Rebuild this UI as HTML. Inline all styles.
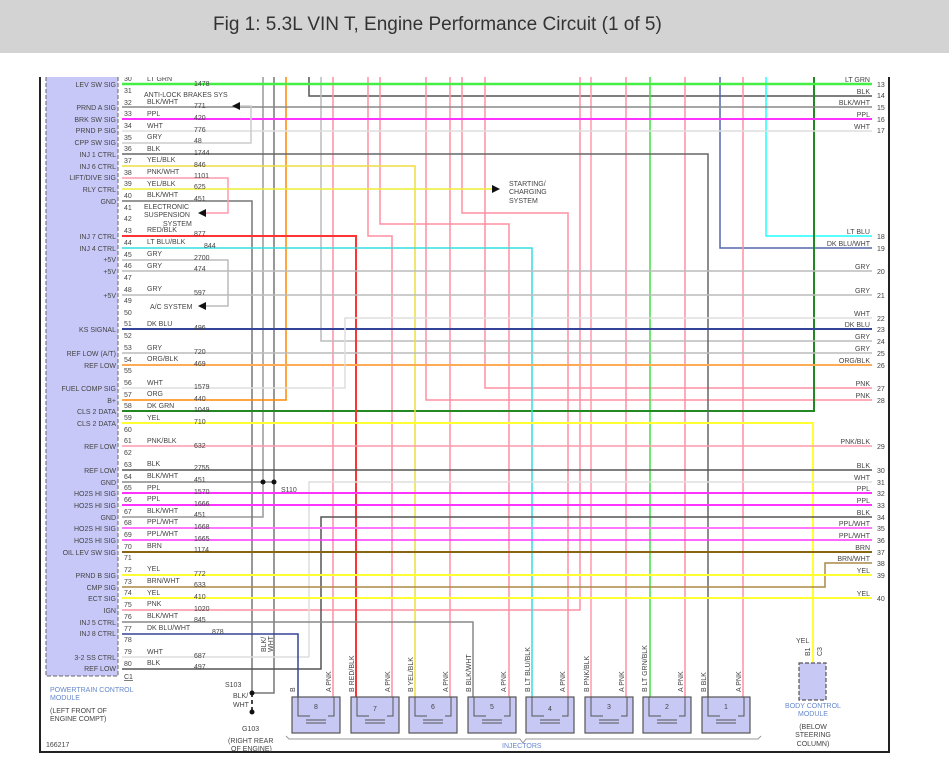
<!DOCTYPE html>
<html><head><meta charset="utf-8"><style>
html,body{margin:0;padding:0;background:#fff;width:949px;height:779px;overflow:hidden}
.hdr{position:absolute;left:0;top:0;width:949px;height:53px;background:#d3d3d3;font-family:"Liberation Sans",sans-serif;font-size:19px;color:#333;line-height:50px}
.hdr span{position:absolute;left:213px;top:0;white-space:nowrap}
svg{position:absolute;left:0;top:0}
text{font-family:"Liberation Sans",sans-serif;font-size:7px;fill:#444}
</style></head><body>
<svg width="949" height="779" viewBox="0 0 949 779">
<g fill="none" stroke-width="1.5">
<path d="M40 77V752H889V77" stroke="#222" stroke-width="2"/>
<rect x="46" y="77" width="72" height="599" fill="#c8c8f8" stroke="none"/>
<path d="M118 77V676H46V77" stroke="#666" stroke-dasharray="4,2" stroke-width="1"/>
<path d="M263 77V517H122" stroke="#999"/>
<path d="M274 77V693H252" stroke="#777"/>
<path d="M122 201H252V693" stroke="#777"/>
<path d="M286 77V400H122" stroke="#ff8800"/>
<path d="M309 77V96H872" stroke="#555"/>
<path d="M333 77V697" stroke="#ff8fa3"/>
<path d="M368 77V236H392V697" stroke="#ff8fa3"/>
<path d="M380 77V224H509V697" stroke="#ff8fa3"/>
<path d="M426 77V400H872" stroke="#ff8fa3"/>
<path d="M450 77V697" stroke="#ff8fa3"/>
<path d="M462 77V213H568V697" stroke="#ff8fa3"/>
<path d="M485 77V388H872" stroke="#ff8fa3"/>
<path d="M580 77V610H122" stroke="#ff8fa3"/>
<path d="M591 77V697" stroke="#ff99aa"/>
<path d="M626 77V697" stroke="#ff8fa3"/>
<path d="M650 77V697" stroke="#44dd44"/>
<path d="M685 77V697" stroke="#ff8fa3"/>
<path d="M720 77V248H872" stroke="#5566aa"/>
<path d="M743 77V697" stroke="#ff8fa3"/>
<path d="M766 77V236H872" stroke="#22ffff"/>
<path d="M814 77V411H122" stroke="#228822" stroke-width="2"/>
<path d="M321 77V341H872" stroke="#bbb"/>
<path d="M122 84H872" stroke="#44ee44" stroke-width="2.5"/>
<path d="M122 107H872" stroke="#888"/>
<path d="M122 119H872" stroke="#ff33ff" stroke-width="2"/>
<path d="M122 131H872" stroke="#ddd"/>
<path d="M122 143H251V106H240" stroke="#ccc"/>
<path d="M122 154H708V697" stroke="#666"/>
<path d="M122 166H415V697" stroke="#eedd44"/>
<path d="M122 178H228V213H206" stroke="#ff99aa"/>
<path d="M122 189H492" stroke="#eeee33"/>
<path d="M122 236H356V697" stroke="#ff3333" stroke-width="2"/>
<path d="M122 248H532V697" stroke="#33dddd"/>
<path d="M122 260H228V306H206" stroke="#bbb"/>
<path d="M122 271H872" stroke="#bbb"/>
<path d="M122 295H872" stroke="#bbb"/>
<path d="M122 329H872" stroke="#334499" stroke-width="2"/>
<path d="M122 353H872" stroke="#bbb"/>
<path d="M122 365H872" stroke="#ffaa55" stroke-width="2"/>
<path d="M122 388H345V318H872" stroke="#ddd"/>
<path d="M122 423H813V662" stroke="#ffff33" stroke-width="2"/>
<path d="M122 446H872" stroke="#ff99aa"/>
<path d="M122 470H872" stroke="#555"/>
<path d="M122 482H274" stroke="#888"/>
<path d="M309 657V482H872" stroke="#ddd"/>
<path d="M122 657H309" stroke="#ddd"/>
<path d="M122 669H321V517H872" stroke="#555"/>
<path d="M122 493H872" stroke="#ff33ff" stroke-width="2"/>
<path d="M122 505H872" stroke="#ff33ff" stroke-width="2"/>
<path d="M122 528H872" stroke="#ff77ff" stroke-width="2"/>
<path d="M122 540H872" stroke="#ff33ff" stroke-width="1.5"/>
<path d="M122 552H872" stroke="#886611" stroke-width="2"/>
<path d="M122 587H825V563H872" stroke="#aa8844"/>
<path d="M122 575H872" stroke="#ffff33" stroke-width="2"/>
<path d="M122 598H872" stroke="#ffff33" stroke-width="2"/>
<path d="M122 622H473V697" stroke="#888"/>
<path d="M122 634H298V697" stroke="#334499"/>
<path d="M252 693V712" stroke="#444" stroke-dasharray="4,3" stroke-width="2"/>
<path d="M286 736L289 739H520L523 743L526 739H758L761 736" stroke="#999" stroke-width="1"/>
</g>
<g fill="#111">
<path d="M232 106L240 102V110Z"/><path d="M198 213L206 209V217Z"/><path d="M198 306L206 302V310Z"/><path d="M500 189L492 185V193Z"/>
<circle cx="263" cy="482" r="2.5"/><circle cx="274" cy="482" r="2.5"/><circle cx="252" cy="693" r="2.5"/><circle cx="252" cy="712" r="2.5"/>
</g>
<g fill="#c8c8f4" stroke="#555" stroke-width="1.2">
<rect x="292" y="697" width="48" height="36"/><rect x="351" y="697" width="48" height="36"/><rect x="409" y="697" width="48" height="36"/><rect x="468" y="697" width="48" height="36"/><rect x="526" y="697" width="48" height="36"/><rect x="585" y="697" width="48" height="36"/><rect x="643" y="697" width="48" height="36"/><rect x="702" y="697" width="48" height="36"/>
<rect x="799" y="663" width="27" height="37" stroke-dasharray="4,2"/>
</g>
<g fill="none" stroke="#555" stroke-width="1">
<path d="M298 697V716H310M328 716H334V697"/><path d="M357 697V716H369M387 716H393V697"/><path d="M415 697V716H427M445 716H451V697"/><path d="M474 697V716H486M504 716H510V697"/><path d="M532 697V716H544M562 716H568V697"/><path d="M591 697V716H603M621 716H627V697"/><path d="M649 697V716H661M679 716H685V697"/><path d="M708 697V716H720M738 716H744V697"/>
<path d="M306 720H326M306 723H326M365 720H385M365 723H385M423 720H443M423 723H443M482 720H502M482 723H502M540 720H560M540 723H560M599 720H619M599 723H619M657 720H677M657 723H677M716 720H736M716 723H736"/>
</g>
<g>
<text x="316" y="709" text-anchor="middle">8</text><text x="375" y="711" text-anchor="middle">7</text><text x="433" y="709" text-anchor="middle">6</text><text x="492" y="709" text-anchor="middle">5</text><text x="550" y="711" text-anchor="middle">4</text><text x="609" y="709" text-anchor="middle">3</text><text x="667" y="709" text-anchor="middle">2</text><text x="726" y="709" text-anchor="middle">1</text>
</g>
<g transform="rotate(-90)">
<text x="-692" y="295">B</text><text x="-692" y="331">A PNK</text>
<text x="-692" y="354">B RED/BLK</text><text x="-692" y="390">A PNK</text>
<text x="-692" y="413">B YEL/BLK</text><text x="-692" y="448">A PNK</text>
<text x="-692" y="471">B BLK/WHT</text><text x="-692" y="506">A PNK</text>
<text x="-692" y="530">B LT BLU/BLK</text><text x="-692" y="565">A PNK</text>
<text x="-692" y="589">B PNK/BLK</text><text x="-692" y="624">A PNK</text>
<text x="-692" y="647">B LT GRN/BLK</text><text x="-692" y="683">A PNK</text>
<text x="-692" y="706">B BLK</text><text x="-692" y="741">A PNK</text>
<text x="-656" y="810">B1</text><text x="-656" y="822">C3</text>
<text x="-652" y="266">BLK/</text><text x="-652" y="273">WHT</text>
</g>
<g>
<text x="124" y="81">30</text><text x="147" y="81">LT GRN</text><text x="194" y="86">1478</text>
<text x="124" y="93">31</text><text x="144" y="97">ANTI-LOCK BRAKES SYS</text>
<text x="124" y="105">32</text><text x="147" y="104">BLK/WHT</text><text x="194" y="108">771</text>
<text x="124" y="116">33</text><text x="147" y="116">PPL</text><text x="194" y="120">420</text>
<text x="124" y="128">34</text><text x="147" y="128">WHT</text><text x="194" y="132">776</text>
<text x="124" y="140">35</text><text x="147" y="139">GRY</text><text x="194" y="143">48</text>
<text x="124" y="151">36</text><text x="147" y="151">BLK</text><text x="194" y="155">1744</text>
<text x="124" y="163">37</text><text x="147" y="162">YEL/BLK</text><text x="194" y="167">846</text>
<text x="124" y="175">38</text><text x="147" y="174">PNK/WHT</text><text x="194" y="178">1101</text>
<text x="124" y="186">39</text><text x="147" y="186">YEL/BLK</text><text x="194" y="189">625</text>
<text x="124" y="198">40</text><text x="147" y="197">BLK/WHT</text><text x="194" y="201">451</text>
<text x="124" y="210">41</text><text x="144" y="209">ELECTRONIC</text>
<text x="124" y="221">42</text><text x="144" y="217">SUSPENSION</text><text x="163" y="226">SYSTEM</text>
<text x="124" y="233">43</text><text x="147" y="232">RED/BLK</text><text x="194" y="236">877</text>
<text x="124" y="245">44</text><text x="147" y="244">LT BLU/BLK</text><text x="204" y="248">844</text>
<text x="124" y="257">45</text><text x="147" y="256">GRY</text><text x="194" y="260">2700</text>
<text x="124" y="268">46</text><text x="147" y="268">GRY</text><text x="194" y="271">474</text>
<text x="124" y="280">47</text>
<text x="124" y="292">48</text><text x="147" y="291">GRY</text><text x="194" y="295">597</text>
<text x="124" y="303">49</text><text x="150" y="309">A/C SYSTEM</text>
<text x="124" y="315">50</text>
<text x="124" y="326">51</text><text x="147" y="326">DK BLU</text><text x="194" y="330">496</text>
<text x="124" y="338">52</text>
<text x="124" y="350">53</text><text x="147" y="350">GRY</text><text x="194" y="354">720</text>
<text x="124" y="362">54</text><text x="147" y="361">ORG/BLK</text><text x="194" y="366">469</text>
<text x="124" y="373">55</text>
<text x="124" y="385">56</text><text x="147" y="385">WHT</text><text x="194" y="389">1579</text>
<text x="124" y="397">57</text><text x="147" y="396">ORG</text><text x="194" y="401">440</text>
<text x="124" y="408">58</text><text x="147" y="408">DK GRN</text><text x="194" y="412">1049</text>
<text x="124" y="420">59</text><text x="147" y="420">YEL</text><text x="194" y="424">710</text>
<text x="124" y="432">60</text>
<text x="124" y="443">61</text><text x="147" y="443">PNK/BLK</text><text x="194" y="448">632</text>
<text x="124" y="455">62</text>
<text x="124" y="467">63</text><text x="147" y="466">BLK</text><text x="194" y="470">2755</text>
<text x="124" y="479">64</text><text x="147" y="478">BLK/WHT</text><text x="194" y="482">451</text>
<text x="124" y="490">65</text><text x="147" y="490">PPL</text><text x="194" y="494">1570</text>
<text x="124" y="502">66</text><text x="147" y="501">PPL</text><text x="194" y="506">1666</text>
<text x="124" y="514">67</text><text x="147" y="513">BLK/WHT</text><text x="194" y="517">451</text>
<text x="124" y="525">68</text><text x="147" y="524">PPL/WHT</text><text x="194" y="529">1668</text>
<text x="124" y="537">69</text><text x="147" y="536">PPL/WHT</text><text x="194" y="541">1665</text>
<text x="124" y="549">70</text><text x="147" y="548">BRN</text><text x="194" y="552">1174</text>
<text x="124" y="560">71</text>
<text x="124" y="572">72</text><text x="147" y="571">YEL</text><text x="194" y="576">772</text>
<text x="124" y="584">73</text><text x="147" y="583">BRN/WHT</text><text x="194" y="587">633</text>
<text x="124" y="595">74</text><text x="147" y="595">YEL</text><text x="194" y="599">410</text>
<text x="124" y="607">75</text><text x="147" y="606">PNK</text><text x="194" y="611">1020</text>
<text x="124" y="619">76</text><text x="147" y="618">BLK/WHT</text><text x="194" y="622">845</text>
<text x="124" y="631">77</text><text x="147" y="630">DK BLU/WHT</text><text x="212" y="634">878</text>
<text x="124" y="642">78</text>
<text x="124" y="654">79</text><text x="147" y="654">WHT</text><text x="194" y="658">687</text>
<text x="124" y="666">80</text><text x="147" y="665">BLK</text><text x="194" y="669">497</text>
<text x="124" y="679" text-decoration="underline">C1</text>
</g>
<g text-anchor="end">
<text x="116" y="87">LEV SW SIG</text><text x="116" y="110">PRND A SIG</text><text x="116" y="122">BRK SW SIG</text><text x="116" y="133">PRND P SIG</text><text x="116" y="145">CPP SW SIG</text><text x="116" y="157">INJ 1 CTRL</text><text x="116" y="169">INJ 6 CTRL</text><text x="116" y="180">LIFT/DIVE SIG</text><text x="116" y="192">RLY CTRL</text><text x="116" y="204">GND</text><text x="116" y="239">INJ 7 CTRL</text><text x="116" y="251">INJ 4 CTRL</text><text x="116" y="262">+5V</text><text x="116" y="274">+5V</text><text x="116" y="298">+5V</text><text x="116" y="332">KS SIGNAL</text><text x="116" y="356">REF LOW (A/T)</text><text x="116" y="368">REF LOW</text><text x="116" y="391">FUEL COMP SIG</text><text x="116" y="403">B+</text><text x="116" y="414">CLS 2 DATA</text><text x="116" y="426">CLS 2 DATA</text><text x="116" y="449">REF LOW</text><text x="116" y="473">REF LOW</text><text x="116" y="485">GND</text><text x="116" y="496">HO2S HI SIG</text><text x="116" y="508">HO2S HI SIG</text><text x="116" y="520">GND</text><text x="116" y="531">HO2S HI SIG</text><text x="116" y="543">HO2S HI SIG</text><text x="116" y="555">OIL LEV SW SIG</text><text x="116" y="578">PRND B SIG</text><text x="116" y="590">CMP SIG</text><text x="116" y="601">ECT SIG</text><text x="116" y="613">IGN</text><text x="116" y="625">INJ 5 CTRL</text><text x="116" y="636">INJ 8 CTRL</text><text x="116" y="660">3-2 SS CTRL</text><text x="116" y="671">REF LOW</text>
</g>
<g text-anchor="end">
<text x="870" y="82">LT GRN</text><text x="870" y="94">BLK</text><text x="870" y="105">BLK/WHT</text><text x="870" y="117">PPL</text><text x="870" y="129">WHT</text><text x="870" y="234">LT BLU</text><text x="870" y="246">DK BLU/WHT</text><text x="870" y="269">GRY</text><text x="870" y="293">GRY</text><text x="870" y="316">WHT</text><text x="870" y="327">DK BLU</text><text x="870" y="339">GRY</text><text x="870" y="351">GRY</text><text x="870" y="363">ORG/BLK</text><text x="870" y="386">PNK</text><text x="870" y="398">PNK</text><text x="870" y="444">PNK/BLK</text><text x="870" y="468">BLK</text><text x="870" y="480">WHT</text><text x="870" y="491">PPL</text><text x="870" y="503">PPL</text><text x="870" y="515">BLK</text><text x="870" y="526">PPL/WHT</text><text x="870" y="538">PPL/WHT</text><text x="870" y="550">BRN</text><text x="870" y="561">BRN/WHT</text><text x="870" y="573">YEL</text><text x="870" y="596">YEL</text>
</g>
<g>
<text x="877" y="87">13</text><text x="877" y="98">14</text><text x="877" y="110">15</text><text x="877" y="122">16</text><text x="877" y="133">17</text><text x="877" y="239">18</text><text x="877" y="251">19</text><text x="877" y="274">20</text><text x="877" y="298">21</text><text x="877" y="321">22</text><text x="877" y="332">23</text><text x="877" y="344">24</text><text x="877" y="356">25</text><text x="877" y="368">26</text><text x="877" y="391">27</text><text x="877" y="403">28</text><text x="877" y="449">29</text><text x="877" y="473">30</text><text x="877" y="485">31</text><text x="877" y="496">32</text><text x="877" y="508">33</text><text x="877" y="520">34</text><text x="877" y="531">35</text><text x="877" y="543">36</text><text x="877" y="555">37</text><text x="877" y="566">38</text><text x="877" y="578">39</text><text x="877" y="601">40</text>
<text x="509" y="186">STARTING/</text><text x="509" y="194">CHARGING</text><text x="509" y="203">SYSTEM</text>
<text x="281" y="492">S110</text>
<text x="225" y="687">S103</text><text x="233" y="698">BLK/</text><text x="233" y="707">WHT</text>
<text x="242" y="731">G103</text><text x="228" y="743">(RIGHT REAR</text><text x="231" y="751">OF ENGINE)</text>
<text x="50" y="692" style="fill:#6688cc">POWERTRAIN CONTROL</text><text x="50" y="700" style="fill:#6688cc">MODULE</text>
<text x="50" y="713">(LEFT FRONT OF</text><text x="50" y="721">ENGINE COMPT)</text>
<text x="46" y="747">166217</text>
<text x="502" y="748" style="fill:#6688cc">INJECTORS</text>
<text x="796" y="643">YEL</text>
<g text-anchor="middle"><text x="813" y="708" style="fill:#6688cc">BODY CONTROL</text><text x="813" y="716" style="fill:#6688cc">MODULE</text><text x="813" y="729">(BELOW</text><text x="813" y="737">STEERING</text><text x="813" y="746">COLUMN)</text></g>
</g>
<rect x="0" y="53" width="949" height="24" fill="#fff"/>
</svg>
<div class="hdr"><span>Fig 1: 5.3L VIN T, Engine Performance Circuit (1 of 5)</span></div>
</body></html>
